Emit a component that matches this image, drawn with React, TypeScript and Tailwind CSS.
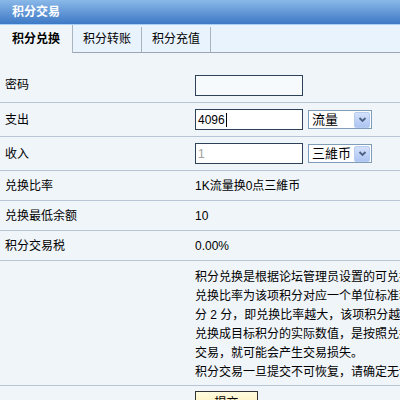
import type { ReactNode } from "react";

const tabs = ["积分兑换", "积分转账", "积分充值"];

const Row = ({ label, h, children }: { label?: string; h: string; children?: ReactNode }) => (
  <div className={`flex items-center border-b border-[#b7c5d4] ${h}`}>
    <div className="w-[195px] shrink-0 pl-[5px]">{label}</div>
    <div className="flex items-center gap-[5px]">{children}</div>
  </div>
);

const Select = ({ value }: { value: string }) => (
  <div className="flex items-center w-[64px] h-[19px] border border-[#7f9db9] bg-white">
    <span className="flex-1 pl-[3px] leading-[17px] text-[13px]">{value}</span>
    <span className="flex items-center justify-center w-[16px] h-[16px] mr-px rounded-[2px] border border-[#b8cbf0] bg-gradient-to-b from-[#d3e1fa] to-[#aec5f2]">
      <svg width="9" height="9" viewBox="0 0 9 9">
        <path d="M1.5 3 L4.5 6 L7.5 3" fill="none" stroke="#4d6185" strokeWidth="1.8" />
      </svg>
    </span>
  </div>
);

export default function App() {
  return (
    <div className="w-[400px] h-[400px] overflow-hidden bg-[#f0f5fa] text-[12px] text-black font-['Liberation_Sans','Noto_Sans_CJK_SC',sans-serif]">
      {/* title bar */}
      <div className="h-[25px] border-b border-[#a6d0f5] bg-gradient-to-b from-[#8ab8e8] to-[#3d79c5] pl-[12px] leading-[24px] font-bold text-white">
        积分交易
      </div>

      {/* tabs */}
      <div className="flex items-start h-[28px] border-b border-[#9ba6b2] bg-[#e9f3fd]">
        {tabs.map((t, i) => (
          <div
            key={t}
            className={
              i === 0
                ? "relative h-[28px] w-[73px] border-r border-[#a9b4bf] bg-[#f0f5fa] text-center font-bold leading-[28px]"
                : "mt-[2px] h-[25px] w-[69px] border-r border-[#a9b4bf] text-center leading-[25px]"
            }
          >
            {t}
          </div>
        ))}
      </div>

      <div className="pt-[15px]">
        <Row label="密码" h="h-[35px]">
          <div className="w-[108px] h-[21px] border border-[#2d4258] bg-[#f7fafd]" />
        </Row>
        <Row label="支出" h="h-[34px]">
          <div className="flex items-center w-[108px] h-[21px] border border-[#2d4258] bg-white pl-[2px]">
            4096
            <span className="ml-[1px] h-[14px] w-px bg-black" />
          </div>
          <Select value="流量" />
        </Row>
        <Row label="收入" h="h-[34px]">
          <div className="flex items-center w-[108px] h-[21px] border border-[#2d4258] bg-white pl-[2px] text-[#a0a0a0]">
            1
          </div>
          <Select value="三維币" />
        </Row>
        <Row label="兑换比率" h="h-[30px]">
          1K流量换0点三維币
        </Row>
        <Row label="兑换最低余额" h="h-[30px]">
          10
        </Row>
        <Row label="积分交易税" h="h-[30px]">
          0.00%
        </Row>

        {/* help text, wider than the panel */}
        <div className="flex h-[125px] border-b border-[#b7c5d4]">
          <div className="w-[195px] shrink-0" />
          <div className="pt-[7px] leading-[19px] whitespace-nowrap">
            <div>积分兑换是根据论坛管理员设置的可兑换积分及兑换比率进行的，</div>
            <div>兑换比率为该项积分对应一个单位标准积分的值，例如兑换比率为</div>
            <div>分 2 分，即兑换比率越大，该项积分越有价值。</div>
            <div>兑换成目标积分的实际数值，是按照兑换比率计算的，</div>
            <div>交易，就可能会产生交易损失。</div>
            <div>积分交易一旦提交不可恢复，请确定无误后再提交。</div>
          </div>
        </div>

        <div className="flex pt-[5px]">
          <div className="w-[195px] shrink-0" />
          <button className="w-[63px] h-[25px] border border-[#333] bg-gradient-to-b from-[#fffbe0] to-[#fde9a0] leading-[23px]">
            提交
          </button>
        </div>
      </div>
    </div>
  );
}
